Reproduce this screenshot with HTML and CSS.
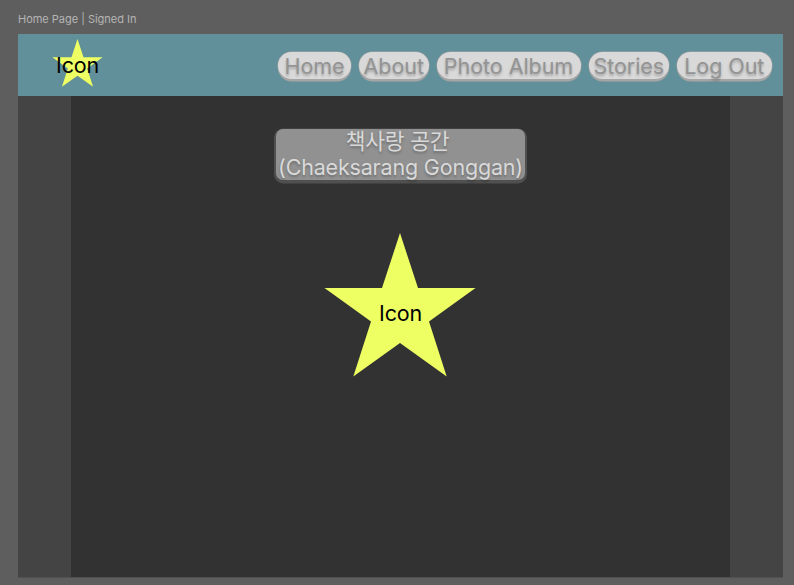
FILE: index.html
```html
<!DOCTYPE html>
<html lang="en">
<head>
<meta charset="utf-8">
<title>Home Page | Signed In</title>
<link rel="stylesheet" href="styles.css">
</head>
<body>
<div class="label">Home Page | Signed In</div>
<div class="frame">
  <header class="header">
    <div class="logo">
      <svg class="star" viewBox="0 0 151 144"><polygon points="75.5,0 93.5,55 151,55 104.5,88.5 122.2,143.5 75.5,110 28.8,143.5 46.5,88.5 0,55 57.5,55"/></svg>
      <span class="star-text">Icon</span>
    </div>
    <nav class="nav">
      <a class="pill home">Home</a>
      <a class="pill about">About</a>
      <a class="pill album">Photo Album</a>
      <a class="pill stories">Stories</a>
      <a class="pill logout">Log Out</a>
    </nav>
  </header>
  <main class="main">
    <h1 class="title"><span class="korean">책사랑 공간&nbsp;</span><br>(Chaeksarang Gonggan)</h1>
    <div class="hero">
      <svg class="star" viewBox="-0.5 0 152 144"><polygon points="75.5,0 93.5,55 151,55 104.5,88.5 122.2,143.5 75.5,110 28.8,143.5 46.5,88.5 0,55 57.5,55"/></svg>
      <span class="star-text">Icon</span>
    </div>
  </main>
</div>
</body>
</html>
```
FILE: styles.css
```css
* { box-sizing: border-box; }
body {
  margin: 0;
  height: 585px;
  overflow: hidden;
  background: #5e5e5e;
  font-family: Inter, "Noto Sans CJK KR", sans-serif;
}
.label {
  height: 33.5px;
  padding: 12px 0 0 18px;
  font-size: 11px;
  line-height: 15px;
  letter-spacing: -0.02px;
  color: #b5b5b5;
}
.frame {
  width: 765px;
  height: 544px;
  margin-left: 18px;
  background: #444;
  border-bottom: 1px solid #505050;
}
.header {
  display: flex;
  justify-content: space-between;
  height: 62.5px;
  padding: 5.5px 11.5px 0 34px;
  background: #62909a;
}
.logo, .hero { display: grid; place-items: center; }
.logo { width: 51px; height: 48px; }
.star { grid-area: 1 / 1; width: 100%; height: 100%; display: block; fill: #edff63; }
.star-text {
  grid-area: 1 / 1;
  font-size: 21.5px;
  font-weight: 400;
  line-height: 26px;
  letter-spacing: -0.2px;
  color: #000;
}
.logo .star-text { padding-top: 4px; }
.nav { display: flex; gap: 8px; padding-top: 12.5px; }
.pill {
  height: 27.5px;
  border-radius: 14px;
  background: #d9d9d9;
  box-shadow: 0 2.5px 0 #a5a5a5, 0 0 0 0.5px #a5a5a5;
  color: #949494;
  font-size: 21.5px;
  font-weight: 400;
  line-height: 29px;
  letter-spacing: -0.05px;
  text-align: center;
  white-space: nowrap;
  text-shadow: 0 2px 2.5px rgba(0, 0, 0, 0.25);
}
.home { width: 73px; }
.about { width: 69.5px; }
.album { width: 144px; }
.stories { width: 80.5px; }
.logout { width: 94.5px; }
.main {
  width: 659px;
  height: 480.5px;
  margin-left: 53px;
  padding-top: 33px;
  background: #323232;
}
.title {
  width: 249px;
  height: 51px;
  margin: 0 auto;
  border-radius: 7px;
  background: #919191;
  box-shadow: 0 1.5px 0 2px #505050;
  color: #d9d9d9;
  font-size: 21.5px;
  font-weight: 400;
  line-height: 25.5px;
  letter-spacing: -0.18px;
  text-align: center;
  white-space: nowrap;
  text-shadow: 0 2px 2.5px rgba(0, 0, 0, 0.25);
}
.title::first-line { line-height: 24px; }
.korean { letter-spacing: -0.2px; }
.hero { width: 152px; height: 144px; margin: 53px 0 0 253px; }
.hero .star-text { padding: 16px 0 0 1px; }
```
